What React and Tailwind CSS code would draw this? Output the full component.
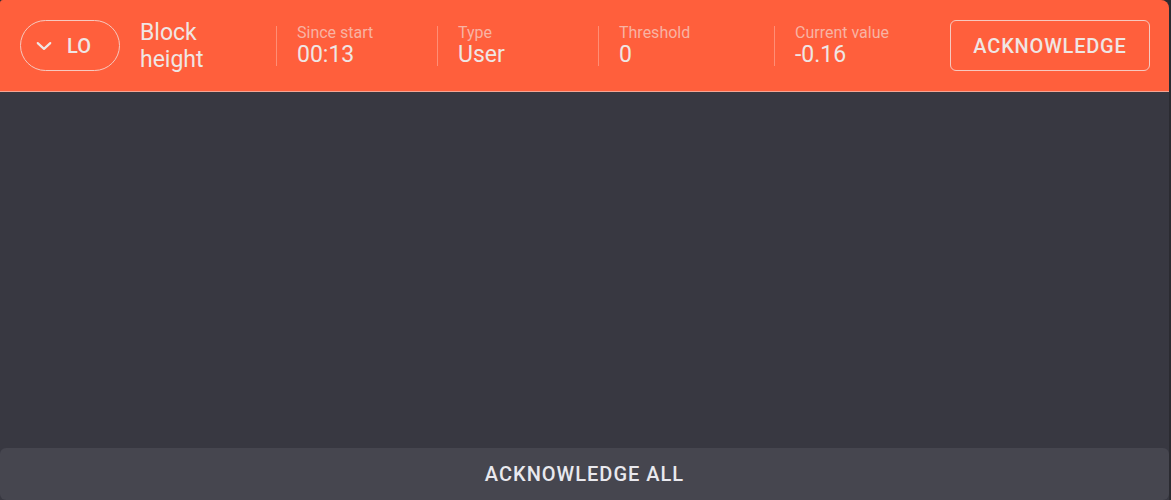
import React from 'react';

const stats = [
    { label: 'Since start', value: '00:13', width: 'w-[161px]' },
    { label: 'Type', value: 'User', width: 'w-[161px]' },
    { label: 'Threshold', value: '0', width: 'w-[176px]' },
    { label: 'Current value', value: '-0.16', width: 'w-[160px]' },
];

function Chevron() {
    return (
        <svg width="20" height="20" viewBox="0 0 24 24" fill="none" stroke="currentColor" strokeWidth="2.6" strokeLinecap="round" strokeLinejoin="round">
            <path d="M4.5 8.5l7.5 7 7.5-7" />
        </svg>
    );
}

export default function App() {
    return (
        <div className="h-[500px] w-[1171px] bg-[#2b2b31] font-['Roboto',sans-serif]">
            <div className="flex h-full w-[1169px] flex-col overflow-hidden rounded-tl-[3px] rounded-tr-lg bg-[#383841]">
                <div className="flex h-[92px] items-center border-b border-[#f4a594] bg-[#ff5f3c] pl-5 pr-[19px] text-[#efe6e4]">
                    <button className="flex h-[51px] w-[100px] items-center justify-center gap-[13px] rounded-full border border-[#f6c9bf] pr-[15px] text-[20px] font-medium">
                        <Chevron />
                        <span>LO</span>
                    </button>
                    <div className="ml-5 w-[136px] text-[23px] leading-[27px]">
                        Block<br />height
                    </div>
                    {stats.map(s => (
                        <div key={s.label} className={`flex items-center ${s.width}`}>
                            <span className="h-[40px] w-px bg-[#ff8e75]" />
                            <div className="pl-5">
                                <div className="text-[16px] leading-[18px] text-[#f8b3a3]">{s.label}</div>
                                <div className="text-[23px] leading-[26px]">{s.value}</div>
                            </div>
                        </div>
                    ))}
                    <button className="ml-auto flex h-[51px] w-[200px] items-center justify-center rounded-md border border-[#f6c9bf] text-[20px] font-medium tracking-[0.04em]">
                        ACKNOWLEDGE
                    </button>
                </div>
                <div className="flex-1" />
                <button className="h-[52px] w-full rounded-md bg-[#46464f] text-[20px] font-medium tracking-[0.05em] text-[#e9e9ee]">
                    ACKNOWLEDGE ALL
                </button>
            </div>
        </div>
    );
}
